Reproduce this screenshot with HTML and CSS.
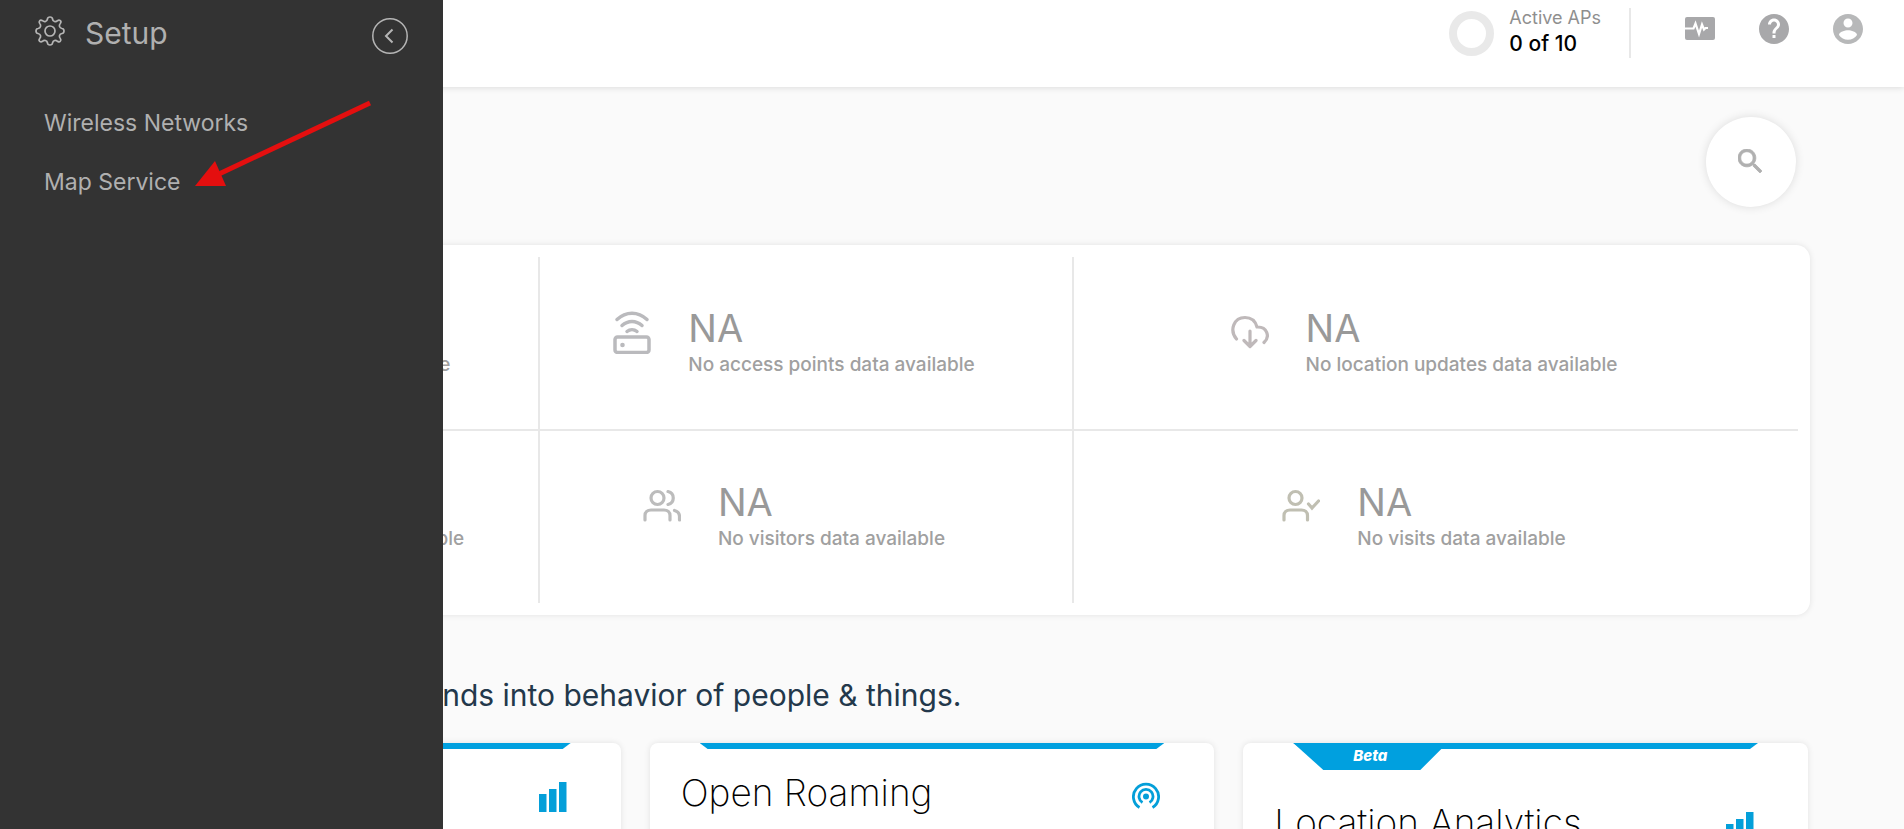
FILE: index.html
```html
<!DOCTYPE html>
<html lang="en">
<head>
    <meta charset="UTF-8">
    <meta name="viewport" content="width=device-width, initial-scale=1.0">
    <title>Dashboard</title>
    <link rel="stylesheet" href="styles.css">
</head>
<body>

    <!-- Top bar -->
    <header class="topbar">
        <div class="active-aps">
            <span class="ring"></span>
            <div>
                <p class="aps-label">Active APs</p>
                <p class="aps-count">0 of 10</p>
            </div>
        </div>
        <div class="top-actions">
            <button type="button" aria-label="Monitoring">
                <svg width="30" height="30" viewBox="0 0 30 30">
                    <rect x="0" y="3" width="30" height="23" rx="2" fill="#a8a8aa"/>
                    <path d="M0 14.500h8.500l2-5 3.500 10.500 3-9.500 2 5 1.500-1.500h2.500" fill="none" stroke="#fff" stroke-width="2.200"/>
                </svg>
            </button>
            <button type="button" aria-label="Help">
                <svg width="30" height="30" viewBox="2 2 20 20">
                    <path fill="#a8a8aa" d="M12 2C6.480 2 2 6.480 2 12s4.480 10 10 10 10-4.480 10-10S17.520 2 12 2zm1 16h-2v-2h2v2zm2.070-6.750l-.9.920C13.450 12.900 13 13.500 13 15h-2v-.5c0-1.100.45-2.100 1.170-2.830l1.240-1.260c.37-.36.590-.86.590-1.410 0-1.100-.9-2-2-2s-2 .9-2 2H8c0-2.210 1.790-4 4-4s4 1.790 4 4c0 .88-.36 1.680-.93 2.250z"/>
                </svg>
            </button>
            <button type="button" aria-label="Account">
                <svg width="30" height="30" viewBox="2 2 20 20">
                    <path fill="#b7b8b9" d="M12 2C6.480 2 2 6.480 2 12s4.480 10 10 10 10-4.480 10-10S17.520 2 12 2zm0 3c1.660 0 3 1.340 3 3s-1.340 3-3 3-3-1.340-3-3 1.340-3 3-3zm0 14.200c-2.500 0-4.710-1.280-6-3.220.030-1.990 4-3.080 6-3.080 1.990 0 5.970 1.090 6 3.080-1.290 1.940-3.500 3.220-6 3.220z"/>
                </svg>
            </button>
        </div>
    </header>

    <!-- Setup side menu -->
    <aside class="sidebar">
        <div class="sidebar-head">
            <svg class="gear" width="30" height="30" viewBox="0 0 30 30" fill="none" stroke="#b5b5b5" stroke-width="1.700" stroke-linejoin="round">
                <path d="M12.500 3Q12.700 1 15 1T17.500 3Q17.800 5 19.500 5.500T22.500 4.700Q24 3.600 25.300 4.700T25.300 7.500Q24 9 24.500 10.500T27 12.500Q29 12.700 29 15T27 17.500Q25 17.800 24.500 19.500T25.300 22.500Q26.400 24 25.300 25.300T22.500 25.300Q21 24 19.500 24.500T17.500 27Q17.300 29 15 29T12.500 27Q12.200 25 10.500 24.500T7.500 25.300Q6 26.400 4.700 25.300T4.700 22.500Q6 21 5.500 19.500T3 17.500Q1 17.300 1 15T3 12.500Q5 12.200 5.500 10.500T4.700 7.500Q3.600 6 4.700 4.700T7.500 4.700Q9 6 10.500 5.500T12.500 3z"/>
                <circle cx="15" cy="15" r="5"/>
            </svg>
            <h2>Setup</h2>
            <button type="button" class="collapse" aria-label="Collapse menu">
                <svg width="36" height="36" viewBox="0 0 36 36" fill="none" stroke="#b5b5b5">
                    <circle cx="18" cy="18" r="17.200" stroke-width="1.500"/>
                    <path d="M20.500 11.500 14 18l6.500 6.500" stroke-width="2"/>
                </svg>
            </button>
        </div>
        <nav class="side-nav">
            <a href="#">Wireless Networks</a>
            <a href="#">Map Service</a>
        </nav>
        <svg class="arrow" width="178" height="90" viewBox="0 0 178 90">
            <path d="M175 5 24 76" stroke="#e40f0f" stroke-width="5"/>
            <path d="M0 88 20 63 31 88z" fill="#e40f0f"/>
        </svg>
    </aside>

    <main class="content">
        <div class="search-row">
            <button type="button" class="search" aria-label="Search">
                <svg width="24" height="24" viewBox="3 3 17.500 17.500">
                    <path fill="#b0b0b0" stroke="#b0b0b0" stroke-width=".6" d="M15.500 14h-.79l-.28-.27C15.410 12.590 16 11.110 16 9.500 16 5.910 13.090 3 9.500 3S3 5.910 3 9.500 5.910 16 9.500 16c1.610 0 3.090-.59 4.230-1.570l.27.28v.79l5 4.990L20.490 19l-4.990-5zm-6 0C7.010 14 5 11.990 5 9.500S7.010 5 9.500 5 14 7.010 14 9.500 11.990 14 9.500 14z"/>
                </svg>
            </button>
        </div>

        <!-- Stats -->
        <section class="stats">
            <div class="stat">
                <span class="stat-icon"></span>
                <div>
                    <p class="value">NA</p>
                    <p class="note">No locations data available</p>
                </div>
            </div>
            <div class="stat">
                <svg class="stat-icon" width="38" height="44" viewBox="0 0 38 44" fill="none" stroke="#bababd" stroke-width="3.500" stroke-linecap="round">
                    <path d="M4 9.500c9-8.500 21-8.500 30 0M9 15.500c6-5.500 14-5.500 20 0M14 21.500c3-2.500 7-2.500 10 0"/>
                    <rect x="2" y="27" width="34" height="15.500" rx="2.500"/>
                    <circle cx="9.500" cy="35" r="2.300" fill="#bababd" stroke="none"/>
                </svg>
                <div>
                    <p class="value">NA</p>
                    <p class="note">No access points data available</p>
                </div>
            </div>
            <div class="stat">
                <svg class="stat-icon" width="38" height="44" viewBox="0 0 38 44" fill="none" stroke="#bfb9ba" stroke-width="3.200" stroke-linecap="round" stroke-linejoin="round">
                    <path d="M5.500 29C-2 20 3 7.500 14 7.500c6.500 0 10.500 4 12 9.500 10-.5 13.500 9.500 7 15.500M19 21v15M13 30.500l6 6 6-6"/>
                </svg>
                <div>
                    <p class="value">NA</p>
                    <p class="note">No location updates data available</p>
                </div>
            </div>
            <div class="stat">
                <span class="stat-icon"></span>
                <div>
                    <p class="value">NA</p>
                    <p class="note">No active users data available</p>
                </div>
            </div>
            <div class="stat">
                <svg class="stat-icon" width="38" height="44" viewBox="0 0 38 44" fill="none" stroke="#bcbcbc" stroke-width="3.200" stroke-linecap="round">
                    <circle cx="14.500" cy="14" r="6.500"/>
                    <path d="M2 36v-4.500c0-3.500 2.500-5.500 6-5.500h13c3.500 0 6 2 6 5.500V36M25 7.500c7 1.500 7 11.500 0 13M31.500 26.500c3 .8 5 3 5 6V36"/>
                </svg>
                <div>
                    <p class="value">NA</p>
                    <p class="note">No visitors data available</p>
                </div>
            </div>
            <div class="stat">
                <svg class="stat-icon" width="38" height="44" viewBox="0 0 38 44" fill="none" stroke="#c0bfb2" stroke-width="3.200" stroke-linecap="round">
                    <circle cx="13.500" cy="14" r="6.500"/>
                    <path d="M2 36v-4.500c0-3.500 2.500-5.500 6-5.500h11.500c3.500 0 6 2 6 5.500V36M26.500 20l3.500 4 6.500-7"/>
                </svg>
                <div>
                    <p class="value">NA</p>
                    <p class="note">No visits data available</p>
                </div>
            </div>
        </section>

        <h1 class="tagline">Gain insights and trends into behavior of people &amp; things.</h1>

        <!-- Apps -->
        <section class="cards">
            <article class="card">
                <div class="strip"></div>
                <div class="card-head">
                    <h3>Right Now</h3>
                    <svg width="28" height="31" viewBox="0 0 28 31" fill="#049fd9">
                        <path d="M0 13h7.500v18H0zM10 8h7.500v23H10zM20 1h7.500v30H20z"/>
                    </svg>
                </div>
            </article>
            <article class="card">
                <div class="strip"></div>
                <div class="card-head">
                    <h3>Open Roaming</h3>
                    <svg width="28" height="31" viewBox="0 0 28 31" fill="none" stroke="#049fd9" stroke-width="2.800">
                        <path d="M7.500 26.500a12.600 12.600 0 1 1 13 0M10.500 21.500a7 7 0 1 1 7 0"/>
                        <circle cx="14" cy="15.500" r="3" fill="#049fd9" stroke="none"/>
                    </svg>
                </div>
            </article>
            <article class="card">
                <div class="strip"></div>
                <span class="beta">Beta</span>
                <div class="card-head with-beta">
                    <h3>Location Analytics</h3>
                    <svg width="28" height="31" viewBox="0 0 28 31" fill="#049fd9">
                        <path d="M0 13h7.500v18H0zM10 8h7.500v23H10zM20 1h7.500v30H20z"/>
                    </svg>
                </div>
            </article>
        </section>
    </main>

</body>
</html>
```

FILE: styles.css
```css
:root {
    --blue: #00a0df;
    --dark: #333333;
    --menu-text: #b0b0b0;
    --muted: #999999;
    --line: #e8e8e8;
}

* {
    margin: 0;
    padding: 0;
    box-sizing: border-box;
    font-family: Inter, 'Liberation Sans', sans-serif;
}

body {
    background: #fafafa;
    height: 100vh;
    overflow: hidden;
}

button {
    background: none;
    border: none;
    cursor: pointer;
}

svg {
    display: block;
    flex: none;
}

/* top bar */
.topbar {
    display: flex;
    justify-content: flex-end;
    height: 87px;
    padding: 8px 41px 0 0;
    background: #fff;
    box-shadow: 0 1px 6px rgba(0, 0, 0, 0.12);
}

.active-aps {
    display: flex;
    gap: 15px;
    height: 50px;
    padding-right: 28px;
    border-right: 2px solid var(--line);
}

.ring {
    width: 45px;
    height: 45px;
    margin-top: 3px;
    border: 8px solid #e9e9e9;
    border-radius: 50%;
}

.aps-label {
    font-size: 18px;
    line-height: 20px;
    color: #8f8f8f;
}

.aps-count {
    font-size: 21px;
    line-height: 32px;
    font-weight: 500;
    color: #000;
}

.top-actions {
    display: flex;
    align-items: flex-start;
    gap: 44px;
    padding: 6px 0 0 54px;
}

/* side menu */
.sidebar {
    position: absolute;
    z-index: 10;
    top: 0;
    left: 0;
    bottom: 0;
    width: 443px;
    background: var(--dark);
    color: var(--menu-text);
}

.sidebar-head {
    display: flex;
    align-items: flex-start;
    padding: 16px 35px 0;
}

.sidebar-head h2 {
    flex: 1;
    margin-left: 20px;
    font-size: 30px;
    line-height: 34px;
    font-weight: 400;
}

.collapse {
    margin-top: 2px;
}

.side-nav {
    display: flex;
    flex-direction: column;
    align-items: flex-start;
    gap: 29px;
    padding: 54px 44px 0;
}

.side-nav a {
    color: var(--menu-text);
    font-size: 23px;
    line-height: 30px;
    text-decoration: none;
}

.arrow {
    position: absolute;
    top: 98px;
    left: 195px;
}

/* page */
.content {
    padding: 30px 94px 0 56px;
}

.search-row {
    display: flex;
    justify-content: flex-end;
    padding-right: 14px;
}

.search {
    display: flex;
    align-items: center;
    justify-content: center;
    width: 90px;
    height: 90px;
    padding: 0 2px 2px 0;
    background: #fff;
    border-radius: 50%;
    box-shadow: 0 0 10px rgba(0, 0, 0, 0.12);
}

.stats {
    display: grid;
    grid-template-columns: 472fr 534fr 724fr;
    grid-template-rows: 174px 172px;
    margin-top: 38px;
    padding: 12px;
    background: #fff;
    border-radius: 14px;
    box-shadow: 0 0 6px rgba(0, 0, 0, 0.1);
}

.stat {
    display: flex;
    align-items: flex-start;
    justify-content: center;
    gap: 37px;
    padding: 53px 24px 0 0;
    border-right: 2px solid var(--line);
}

.stat:nth-child(3n) {
    border-right: none;
}

.stat:nth-child(-n+3) {
    border-bottom: 2px solid var(--line);
}

.stat-icon {
    width: 38px;
    height: 44px;
    flex: none;
}

.value {
    font-size: 38px;
    line-height: 36px;
    font-weight: 400;
    color: var(--muted);
}

.note {
    margin-top: 7px;
    font-size: 19px;
    line-height: 24px;
    font-weight: 500;
    color: #a0a0a0;
}

.tagline {
    padding-left: 96px;
    margin-top: 61px;
    font-size: 30px;
    line-height: 38px;
    font-weight: 400;
    color: #23384b;
}

.cards {
    display: grid;
    grid-template-columns: repeat(3, 1fr);
    gap: 29px;
    margin-top: 29px;
    padding-right: 2px;
}

.card {
    position: relative;
    height: 280px;
    background: #fff;
    border-radius: 8px;
    box-shadow: 0 0 6px rgba(0, 0, 0, 0.1);
}

.strip {
    height: 6px;
    margin: 0 50px;
    background: var(--blue);
    clip-path: polygon(0 0, 100% 0, calc(100% - 8px) 100%, 8px 100%);
}

.beta {
    position: absolute;
    top: 0;
    left: 50px;
    width: 154px;
    height: 27px;
    background: var(--blue);
    clip-path: polygon(0 0, 100% 0, 127px 100%, 30px 100%);
    color: #fff;
    font-size: 15px;
    line-height: 26px;
    font-weight: 800;
    font-style: italic;
    text-align: center;
}

.card-head {
    display: flex;
    align-items: flex-start;
    justify-content: space-between;
    padding: 30px 54px 0 31px;
}

.card-head.with-beta {
    padding-top: 60px;
}

.card-head h3 {
    font-size: 37px;
    line-height: 28px;
    font-weight: 200;
    color: #000;
}

.card-head svg {
    margin-top: 2px;
}
```
